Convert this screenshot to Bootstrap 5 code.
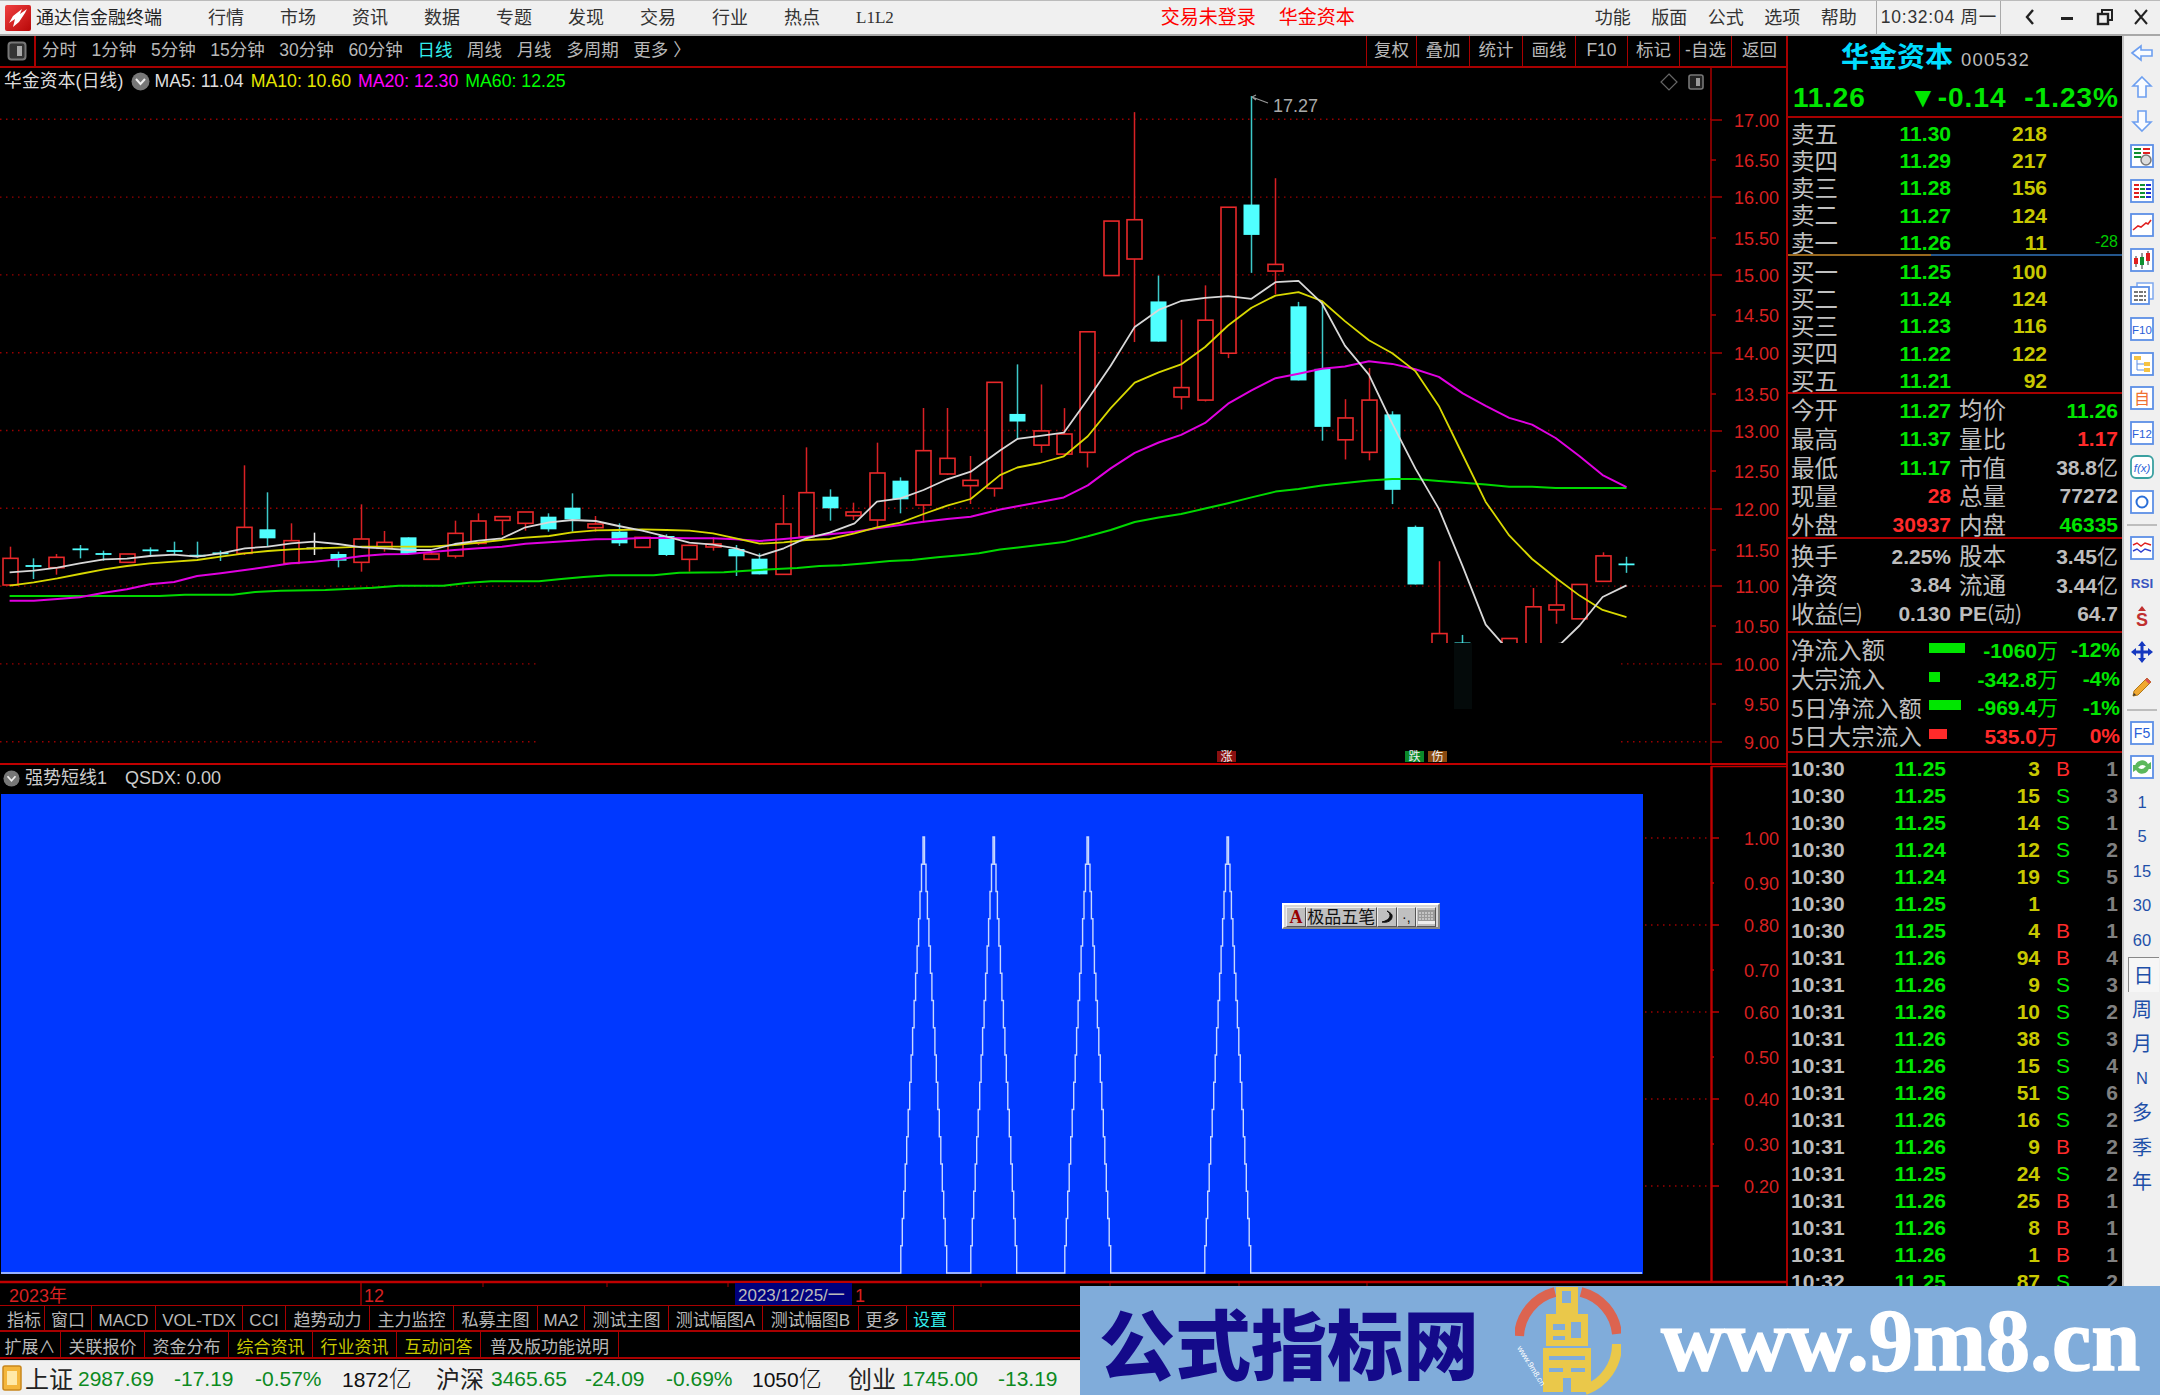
<!DOCTYPE html>
<html lang="zh-CN">
<head>
<meta charset="utf-8">
<title>通达信金融终端</title>
<link href="https://cdn.jsdelivr.net/npm/bootstrap@5.3.0/dist/css/bootstrap.min.css" rel="stylesheet">
<style>
html,body{margin:0;height:100%;background:#000;overflow:hidden}
body{font-family:"Liberation Sans","Noto Sans CJK SC",sans-serif;line-height:1;color:#bbb}
.app-root{width:2160px;height:1395px;display:flex;flex-direction:column;position:relative}
/* title bar */
.title-strip{height:36px;flex:none;background:#f0f0f0;border-top:1px solid #bbb;border-bottom:2px solid #a8a8a8;font-size:18px;color:#333;white-space:nowrap}
.logo-mark{width:26px;height:26px;margin-left:5px;flex:none}
.app-name{margin-left:5px;width:125px;color:#222}
.menu-set{margin-left:47px;gap:36px}
.menu-set .l-code{font-size:17px;font-family:"Liberation Serif",serif}
.login-set{margin-left:267px;gap:23px;font-size:19px;color:#f00}
.util-set{margin-left:240px;gap:20.5px}
.clock-box{margin-left:19px;border-left:1px solid #aaa;border-right:1px solid #aaa;height:33px;width:125px;padding-left:4px;font-size:17.5px;letter-spacing:.75px}
.win-btns{margin-left:0;flex:1;color:#222}
.win-btns svg{position:absolute;top:8px}
/* middle */
.mid-zone{height:1324px;flex:none;display:flex}
.left-col{width:1787px;flex:none;display:flex;flex-direction:column}
.tool-strip{height:32px;flex:none;border-bottom:2px solid #a80000;font-size:17.5px;color:#b8b8b8;white-space:nowrap}
.tool-box{width:36px;height:30px;border-right:2px solid #a80000;flex:none}
.per-set{margin-left:6px;gap:14.6px}
.cyan-txt{color:#33eeee}
.act-set{margin-left:auto;height:30px}
.act-cell{border-left:1px solid #a80000;height:30px;display:flex;align-items:center;justify-content:center}
.chart-wrap{position:relative;height:1237px;flex:none}
.chart-wrap svg.chart-canvas{display:block}
.legend-top{position:absolute;left:4px;top:4px;font-size:17.7px;white-space:nowrap;color:#ddd;gap:0}
.legend-top .mk{width:19px;height:19px;margin:0 5px 0 7px;flex:none}
.legend-top .ma-it{margin-right:7px}
.legend-low{position:absolute;left:3px;top:701px;font-size:18px;white-space:nowrap;color:#ccc}
.ime-bar{position:absolute;left:1282px;top:835px;width:158px;height:26px;background:#d6d6d6;border:2px solid;border-color:#fff #888 #888 #fff;font-size:17px;color:#111;display:flex;padding:2px}
.ime-cell{background:#c0c0c0;border:1px solid;border-color:#eee #555 #555 #eee;height:20px;display:flex;align-items:center;justify-content:center;overflow:hidden}
.tab-strip{height:27px;flex:none;border-bottom:2px solid #a80000;font-size:17px;color:#b8b8b8;white-space:nowrap}
.tab-cell{border-right:1px solid #a80000;height:25px;padding-top:5px;display:flex;align-items:center;justify-content:center;flex:none}
.yel-txt{color:#c8c800}
/* quote panel */
.quote-col{width:336px;flex:none;border-left:2px solid #a80000;margin-left:-1px;display:flex;flex-direction:column;overflow:hidden;font-size:21px;font-weight:700;white-space:nowrap}
.q-sec{border-bottom:2px solid #a80000;flex:none;padding-left:3px}
.name-row{height:44px;padding-left:53px}
.name-big{font-size:28px;color:#00dcff;font-weight:700;width:120px}
.code-txt{font-size:18.5px;color:#bbb;font-weight:400;letter-spacing:1.2px;margin-top:5px}
.px-row{height:38px;font-size:28px;color:#00e600;position:relative;padding-left:5px}
.px-row .p1{width:116px;letter-spacing:.8px}
.px-row .p2{width:90px;letter-spacing:1px}
.px-row .p3{width:120px;letter-spacing:1px}
.q-row{display:flex;align-items:center;padding-top:4px}
.r27{height:27.2px}
.trade-list .r27{height:27px}
.r285{height:28.6px}
.lb{font-family:"Noto Sans CJK SC",sans-serif;font-weight:400;font-size:23.5px;color:#c0c0c0;flex:none}
.lb-a{width:60px}
.va{width:100px;text-align:right;flex:none}
.vb{width:96px;text-align:right;flex:none}
.vc{width:71px;text-align:right;flex:none}
.lb-b{width:66px;margin-left:8px}
.vd{width:93px;text-align:right;flex:none}
.gr{color:#00e600}.ye{color:#c8c800}.re{color:#ff2a2a}.gy{color:#bdbdbd}.dg{color:#808080}
.thin-g{font-size:16px;font-weight:400;color:#00c800}
.cjk-n{font-family:"Noto Sans CJK SC",sans-serif;font-weight:400}
.split-line{height:2px;flex:none;background:linear-gradient(90deg,#9a6a20 0 143px,#24568c 143px 100%)}
.flow-lb{width:138px;flex:none;font-family:"Noto Sans CJK SC",sans-serif;font-weight:400;font-size:23.5px;color:#c0c0c0}
.flow-lb.wide-lb{letter-spacing:.6px;font-size:23px}
.flow-bar{width:36px;flex:none;height:10px;margin-top:-4px}
.flow-bar i{display:block;height:10px}
.ve{width:93px;text-align:right;flex:none}
.vf{width:62px;text-align:right;flex:none}
.t-a{width:60px;flex:none;color:#bdbdbd}
.t-b{width:95px;text-align:right;flex:none;color:#00e600}
.t-c{width:94px;text-align:right;flex:none;color:#c8c800}
.t-d{width:30px;text-align:right;flex:none;font-weight:400}
.t-e{width:48px;text-align:right;flex:none;color:#808080}
/* sidebar */
.side-col{flex:1;background:#f0f0f0;border-left:2px solid #c4c4c4;display:flex;flex-direction:column;align-items:center;color:#1e4fa8;font-size:16.5px;position:relative;padding-top:0}
.side-it{height:34.6px;flex:none;width:100%;display:flex;align-items:center;justify-content:center}
.side-it:first-child{height:33.6px}
.side-it svg{width:24px;height:24px}
.side-it text{font-family:"Liberation Sans",sans-serif}
.side-sep{height:2px;width:30px;background:#bdbdbd;margin:4.8px 0}
.side-txt{height:34.5px;flex:none;width:100%;display:flex;align-items:center;justify-content:center}
.side-on{background:#f6f6f6;border-top:1px solid #888;border-left:1px solid #888;width:31px;margin-left:2px}
.side-cjk{font-family:"Noto Sans CJK SC",sans-serif;font-size:20px}
/* status */
.status-strip{height:35px;flex:none;background:#f0f0f0;display:grid;grid-template-columns:23px 53px 96px 81px 87px 94px 55px 94px 81px 86px 96px 54px 96px 80px 1fr;align-items:center;font-size:21px;color:#0d8a1f;white-space:nowrap;padding-left:2px;border-top:1px solid #ddd}
.st-idx{font-size:24px;color:#222;font-family:"Noto Sans CJK SC",sans-serif}
.st-amt{color:#111}
.st-amt span{font-family:"Noto Sans CJK SC",sans-serif;font-size:23px;font-weight:300}
/* banner */
.wm-banner{position:absolute;left:1080px;top:1286px;width:1080px;height:109px;background:#80acda;display:flex;align-items:center}
.wm-cn{font-family:"Noto Sans CJK SC",sans-serif;font-weight:900;font-size:76px;color:#140a8a;margin-left:19px;width:416px;letter-spacing:0;line-height:1;white-space:nowrap}
.wm-en{font-family:"Liberation Serif",serif;font-weight:700;font-size:88px;color:#fff;margin-left:40px;line-height:1;white-space:nowrap;-webkit-text-stroke:1.5px #fff}
.wm-logo{width:106px;height:109px;flex:none}
</style>
</head>
<body>
<div class="app-root">

<header class="title-strip d-flex align-items-center">
  <svg class="logo-mark" viewBox="0 0 26 26"><defs><linearGradient id="lg" x1="0" y1="0" x2="1" y2="1"><stop offset="0" stop-color="#f04040"/><stop offset="1" stop-color="#b80808"/></linearGradient></defs><rect width="26" height="26" rx="2" fill="url(#lg)"/><path d="M22 4 L15 9 L17 4 L8 11 L4 18 L10 14 L8 22 L14 17 L20 8 Z" fill="#fff"/></svg>
  <span class="app-name">通达信金融终端</span>
  <nav class="menu-set d-flex"><span>行情</span><span>市场</span><span>资讯</span><span>数据</span><span>专题</span><span>发现</span><span>交易</span><span>行业</span><span>热点</span><span class="l-code">L1L2</span></nav>
  <div class="login-set d-flex"><span>交易未登录</span><span>华金资本</span></div>
  <nav class="util-set d-flex"><span>功能</span><span>版面</span><span>公式</span><span>选项</span><span>帮助</span></nav>
  <div class="clock-box d-flex align-items-center">10:32:04 周一</div>
  <div class="win-btns">
    <svg style="left:2022px" width="16" height="18" viewBox="0 0 16 18"><path d="M11 2 L5 9 L11 16" fill="none" stroke="#222" stroke-width="2.4"/></svg>
    <svg style="left:2060px" width="14" height="18" viewBox="0 0 14 18"><rect x="1" y="9" width="12" height="3" fill="#222"/></svg>
    <svg style="left:2096px" width="18" height="18" viewBox="0 0 18 18"><rect x="6" y="2" width="10" height="10" fill="none" stroke="#222" stroke-width="2"/><rect x="2" y="6" width="10" height="10" fill="#f0f0f0" stroke="#222" stroke-width="2.4"/></svg>
    <svg style="left:2133px" width="16" height="18" viewBox="0 0 16 18"><path d="M2 2 L14 16 M14 2 L2 16" stroke="#222" stroke-width="2"/></svg>
  </div>
</header>

<div class="mid-zone">
  <div class="left-col">
    <div class="tool-strip d-flex align-items-center">
      <div class="tool-box d-flex align-items-center justify-content-center"><svg width="20" height="20" viewBox="0 0 20 20"><rect x="1.5" y="1.5" width="17" height="17" rx="3" fill="#333" stroke="#777" stroke-width="2"/><rect x="10" y="5" width="5" height="10" fill="#aaa"/></svg></div>
      <nav class="per-set d-flex align-items-center"><span>分时</span><span>1分钟</span><span>5分钟</span><span>15分钟</span><span>30分钟</span><span>60分钟</span><span class="cyan-txt">日线</span><span>周线</span><span>月线</span><span>多周期</span><span>更多 〉</span></nav>
      <nav class="act-set d-flex">
        <span class="act-cell" style="width:50px">复权</span><span class="act-cell" style="width:53px">叠加</span><span class="act-cell" style="width:53px">统计</span><span class="act-cell" style="width:53px">画线</span><span class="act-cell" style="width:52px">F10</span><span class="act-cell" style="width:52px">标记</span><span class="act-cell" style="width:52px">-自选</span><span class="act-cell" style="width:56px">返回</span>
      </nav>
    </div>

    <div class="chart-wrap">
      <svg class="chart-canvas" id="cv" width="1787" height="1237" viewBox="0 68 1787 1237" xmlns="http://www.w3.org/2000/svg" font-family="Liberation Sans, sans-serif"></svg>
      <div class="legend-top d-flex align-items-center">
        <span style="letter-spacing:.2px">华金资本(日线)</span>
        <svg class="mk" viewBox="0 0 19 19"><circle cx="9.5" cy="9.5" r="9" fill="#777"/><path d="M5 7 L9.5 12 L14 7" fill="none" stroke="#eee" stroke-width="2"/></svg>
        <span class="ma-it">MA5: 11.04</span><span class="ma-it" style="color:#e6e600">MA10: 10.60</span><span class="ma-it" style="color:#f0f">MA20: 12.30</span><span style="color:#0f0">MA60: 12.25</span>
      </div>
      <div class="legend-low d-flex align-items-center">
        <svg width="17" height="17" viewBox="0 0 19 19" class="me-1"><circle cx="9.5" cy="9.5" r="9" fill="#777"/><path d="M5 7 L9.5 12 L14 7" fill="none" stroke="#eee" stroke-width="2"/></svg>
        <span style="margin-right:18px;margin-left:1px">强势短线1</span><span>QSDX: 0.00</span>
      </div>
      <div class="ime-bar">
        <span class="ime-cell" style="width:20px;color:#900;font-family:'Liberation Serif',serif;font-weight:700;font-size:18px">A</span>
        <span class="ime-cell" style="width:72px">极品五笔</span>
        <span class="ime-cell" style="width:20px"><svg width="14" height="14" viewBox="0 0 14 14"><path d="M7 1 C12 4 11 10 2 12 C7 13 13 11 12 5 C11 3 9 2 7 1Z" fill="#111" stroke="#111"/></svg></span>
        <span class="ime-cell" style="width:20px;font-size:14px">·,</span>
        <span class="ime-cell" style="width:20px"><svg width="17" height="14" viewBox="0 0 17 14"><rect width="17" height="14" fill="#999"/><path d="M1 3H16M1 6H16M1 9H16" stroke="#eee" stroke-dasharray="2 1"/><rect y="11" width="17" height="3" fill="#eee"/></svg></span>
      </div>
    </div>

    <nav class="tab-strip d-flex align-items-center" style="border-top:1px solid #a80000">
      <span class="tab-cell ms-1" style="width:41px">指标</span><span class="tab-cell" style="width:47px">窗口</span><span class="tab-cell" style="width:64px">MACD</span><span class="tab-cell" style="width:87px">VOL-TDX</span><span class="tab-cell" style="width:43px">CCI</span><span class="tab-cell" style="width:84px">趋势动力</span><span class="tab-cell" style="width:84px">主力监控</span><span class="tab-cell" style="width:84px">私募主图</span><span class="tab-cell" style="width:47px">MA2</span><span class="tab-cell" style="width:84px">测试主图</span><span class="tab-cell" style="width:94px">测试幅图A</span><span class="tab-cell" style="width:96px">测试幅图B</span><span class="tab-cell" style="width:48px">更多</span><span class="tab-cell cyan-txt" style="width:47px">设置</span>
    </nav>
    <nav class="tab-strip d-flex align-items-center">
      <span class="tab-cell" style="width:61px">扩展∧</span><span class="tab-cell" style="width:84px">关联报价</span><span class="tab-cell" style="width:84px">资金分布</span><span class="tab-cell yel-txt" style="width:84px">综合资讯</span><span class="tab-cell yel-txt" style="width:84px">行业资讯</span><span class="tab-cell yel-txt" style="width:84px">互动问答</span><span class="tab-cell" style="width:138px">普及版功能说明</span>
    </nav>
  </div>

  <aside class="quote-col">
    <div class="name-row d-flex align-items-center"><span class="name-big">华金资本</span><span class="code-txt">000532</span></div>
    <div class="q-sec px-row d-flex align-items-center"><span class="p1">11.26</span><span class="p2 text-end">▼-0.14</span><span class="p3 text-end">-1.23%</span></div>

    <section class="q-body" style="padding-left:3px">
      <div class="q-row r27"><span class="lb lb-a">卖五</span><span class="va gr">11.30</span><span class="vb ye">218</span></div>
      <div class="q-row r27"><span class="lb lb-a">卖四</span><span class="va gr">11.29</span><span class="vb ye">217</span></div>
      <div class="q-row r27"><span class="lb lb-a">卖三</span><span class="va gr">11.28</span><span class="vb ye">156</span></div>
      <div class="q-row r27"><span class="lb lb-a">卖二</span><span class="va gr">11.27</span><span class="vb ye">124</span></div>
      <div class="q-row r27"><span class="lb lb-a">卖一</span><span class="va gr">11.26</span><span class="vb ye">11</span><span class="vc thin-g">-28</span></div>
    </section>
    <div class="split-line"></div>
    <section class="q-sec">
      <div class="q-row r27"><span class="lb lb-a">买一</span><span class="va gr">11.25</span><span class="vb ye">100</span></div>
      <div class="q-row r27"><span class="lb lb-a">买二</span><span class="va gr">11.24</span><span class="vb ye">124</span></div>
      <div class="q-row r27"><span class="lb lb-a">买三</span><span class="va gr">11.23</span><span class="vb ye">116</span></div>
      <div class="q-row r27"><span class="lb lb-a">买四</span><span class="va gr">11.22</span><span class="vb ye">122</span></div>
      <div class="q-row r27"><span class="lb lb-a">买五</span><span class="va gr">11.21</span><span class="vb ye">92</span></div>
    </section>
    <section class="q-sec">
      <div class="q-row r285"><span class="lb lb-a">今开</span><span class="va gr">11.27</span><span class="lb lb-b">均价</span><span class="vd gr">11.26</span></div>
      <div class="q-row r285"><span class="lb lb-a">最高</span><span class="va gr">11.37</span><span class="lb lb-b">量比</span><span class="vd re">1.17</span></div>
      <div class="q-row r285"><span class="lb lb-a">最低</span><span class="va gr">11.17</span><span class="lb lb-b">市值</span><span class="vd gy">38.8<span class="cjk-n">亿</span></span></div>
      <div class="q-row r285"><span class="lb lb-a">现量</span><span class="va re">28</span><span class="lb lb-b">总量</span><span class="vd gy">77272</span></div>
      <div class="q-row r285"><span class="lb lb-a">外盘</span><span class="va re">30937</span><span class="lb lb-b">内盘</span><span class="vd gr">46335</span></div>
    </section>
    <section class="q-sec" style="padding-top:1px;padding-bottom:5px">
      <div class="q-row r285"><span class="lb lb-a">换手</span><span class="va gy">2.25%</span><span class="lb lb-b">股本</span><span class="vd gy">3.45<span class="cjk-n">亿</span></span></div>
      <div class="q-row r285"><span class="lb lb-a">净资</span><span class="va gy">3.84</span><span class="lb lb-b">流通</span><span class="vd gy">3.44<span class="cjk-n">亿</span></span></div>
      <div class="q-row r285"><span class="lb" style="width:78px">收益㈢</span><span class="gy text-end flex-none" style="width:82px">0.130</span><span class="lb-b gy flex-none">PE<span class="cjk-n">(动)</span></span><span class="vd gy">64.7</span></div>
    </section>
    <section class="q-sec" style="padding-top:1px;padding-bottom:3px">
      <div class="q-row r285"><span class="flow-lb">净流入额</span><span class="flow-bar"><i class="w-100" style="background:#00e600"></i></span><span class="ve gr">-1060<span class="cjk-n">万</span></span><span class="vf gr">-12%</span></div>
      <div class="q-row r285"><span class="flow-lb">大宗流入</span><span class="flow-bar"><i style="width:11px;background:#00e600"></i></span><span class="ve gr">-342.8<span class="cjk-n">万</span></span><span class="vf gr">-4%</span></div>
      <div class="q-row r285"><span class="flow-lb wide-lb">5日净流入额</span><span class="flow-bar"><i style="width:32px;background:#00e600"></i></span><span class="ve gr">-969.4<span class="cjk-n">万</span></span><span class="vf gr">-1%</span></div>
      <div class="q-row r285"><span class="flow-lb wide-lb">5日大宗流入</span><span class="flow-bar"><i style="width:18px;background:#ff2a2a"></i></span><span class="ve re">535.0<span class="cjk-n">万</span></span><span class="vf re">0%</span></div>
    </section>
    <section class="trade-list" style="padding-left:3px;flex:1;overflow:hidden">
      <div class="q-row r27"><span class="t-a">10:30</span><span class="t-b">11.25</span><span class="t-c">3</span><span class="t-d re">B</span><span class="t-e">1</span></div>
      <div class="q-row r27"><span class="t-a">10:30</span><span class="t-b">11.25</span><span class="t-c">15</span><span class="t-d gr">S</span><span class="t-e">3</span></div>
      <div class="q-row r27"><span class="t-a">10:30</span><span class="t-b">11.25</span><span class="t-c">14</span><span class="t-d gr">S</span><span class="t-e">1</span></div>
      <div class="q-row r27"><span class="t-a">10:30</span><span class="t-b">11.24</span><span class="t-c">12</span><span class="t-d gr">S</span><span class="t-e">2</span></div>
      <div class="q-row r27"><span class="t-a">10:30</span><span class="t-b">11.24</span><span class="t-c">19</span><span class="t-d gr">S</span><span class="t-e">5</span></div>
      <div class="q-row r27"><span class="t-a">10:30</span><span class="t-b">11.25</span><span class="t-c">1</span><span class="t-d"></span><span class="t-e">1</span></div>
      <div class="q-row r27"><span class="t-a">10:30</span><span class="t-b">11.25</span><span class="t-c">4</span><span class="t-d re">B</span><span class="t-e">1</span></div>
      <div class="q-row r27"><span class="t-a">10:31</span><span class="t-b">11.26</span><span class="t-c">94</span><span class="t-d re">B</span><span class="t-e">4</span></div>
      <div class="q-row r27"><span class="t-a">10:31</span><span class="t-b">11.26</span><span class="t-c">9</span><span class="t-d gr">S</span><span class="t-e">3</span></div>
      <div class="q-row r27"><span class="t-a">10:31</span><span class="t-b">11.26</span><span class="t-c">10</span><span class="t-d gr">S</span><span class="t-e">2</span></div>
      <div class="q-row r27"><span class="t-a">10:31</span><span class="t-b">11.26</span><span class="t-c">38</span><span class="t-d gr">S</span><span class="t-e">3</span></div>
      <div class="q-row r27"><span class="t-a">10:31</span><span class="t-b">11.26</span><span class="t-c">15</span><span class="t-d gr">S</span><span class="t-e">4</span></div>
      <div class="q-row r27"><span class="t-a">10:31</span><span class="t-b">11.26</span><span class="t-c">51</span><span class="t-d gr">S</span><span class="t-e">6</span></div>
      <div class="q-row r27"><span class="t-a">10:31</span><span class="t-b">11.26</span><span class="t-c">16</span><span class="t-d gr">S</span><span class="t-e">2</span></div>
      <div class="q-row r27"><span class="t-a">10:31</span><span class="t-b">11.26</span><span class="t-c">9</span><span class="t-d re">B</span><span class="t-e">2</span></div>
      <div class="q-row r27"><span class="t-a">10:31</span><span class="t-b">11.25</span><span class="t-c">24</span><span class="t-d gr">S</span><span class="t-e">2</span></div>
      <div class="q-row r27"><span class="t-a">10:31</span><span class="t-b">11.26</span><span class="t-c">25</span><span class="t-d re">B</span><span class="t-e">1</span></div>
      <div class="q-row r27"><span class="t-a">10:31</span><span class="t-b">11.26</span><span class="t-c">8</span><span class="t-d re">B</span><span class="t-e">1</span></div>
      <div class="q-row r27"><span class="t-a">10:31</span><span class="t-b">11.26</span><span class="t-c">1</span><span class="t-d re">B</span><span class="t-e">1</span></div>
      <div class="q-row r27"><span class="t-a">10:32</span><span class="t-b">11.25</span><span class="t-c">87</span><span class="t-d gr">S</span><span class="t-e">2</span></div>
    </section>
  </aside>

  <aside class="side-col">
    <div class="side-it"><svg viewBox="0 0 24 24"><path d="M2 12 L11 5 V9 H22 V15 H11 V19Z" fill="#fafcff" stroke="#6d9ff0" stroke-width="1.6"/></svg></div>
    <div class="side-it"><svg viewBox="0 0 24 24"><path d="M12 2 L21 11 H16 V22 H8 V11 H3Z" fill="#fafcff" stroke="#6d9ff0" stroke-width="1.6"/></svg></div>
    <div class="side-it"><svg viewBox="0 0 24 24"><path d="M12 22 L21 13 H16 V2 H8 V13 H3Z" fill="#fafcff" stroke="#6d9ff0" stroke-width="1.6"/></svg></div>
    <div class="side-it"><svg viewBox="0 0 24 24"><rect x="1" y="1" width="22" height="22" fill="#fff" stroke="#5c8fe6" stroke-width="1.8"/><path d="M4 5H11M4 9H11M4 13H11" stroke="#109030" stroke-width="2"/><path d="M13 5H20M13 9H20" stroke="#e02020" stroke-width="2"/><circle cx="16" cy="16" r="5" fill="#ddd" stroke="#777" stroke-width="1.5"/></svg></div>
    <div class="side-it"><svg viewBox="0 0 24 24"><rect x="1" y="1" width="22" height="22" fill="#fff" stroke="#5c8fe6" stroke-width="1.8"/><path d="M4 6H9M4 10H9M4 14H9M4 18H9" stroke="#e02020" stroke-width="2"/><path d="M10 6H15M10 10H15M10 14H15M10 18H15" stroke="#109030" stroke-width="2"/><path d="M16 6H21M16 10H21M16 14H21M16 18H21" stroke="#2030d0" stroke-width="2"/></svg></div>
    <div class="side-it"><svg viewBox="0 0 24 24"><rect x="1" y="1" width="22" height="22" fill="#fff" stroke="#5c8fe6" stroke-width="1.8"/><path d="M3 17 L8 13 L11 14 L16 10 L18 11 L21 7" fill="none" stroke="#e02020" stroke-width="1.6"/></svg></div>
    <div class="side-it"><svg viewBox="0 0 24 24"><rect x="1" y="1" width="22" height="22" fill="#fff" stroke="#5c8fe6" stroke-width="1.8"/><path d="M6 8V19M12 5V21M18 3V17" stroke="#333" stroke-width="1"/><rect x="4" y="10" width="4" height="6" fill="#e02020"/><rect x="10" y="9" width="4" height="8" fill="#109030"/><rect x="16" y="5" width="4" height="8" fill="#e02020"/></svg></div>
    <div class="side-it"><svg viewBox="0 0 24 24"><rect x="7" y="1" width="16" height="16" fill="#fff" stroke="#7ea8ee" stroke-width="1.5"/><rect x="1" y="5" width="18" height="17" fill="#fff" stroke="#5c8fe6" stroke-width="1.8"/><path d="M4 10H16M4 14H16M4 18H16" stroke="#777" stroke-width="1.8" stroke-dasharray="4 1"/></svg></div>
    <div class="side-it"><svg viewBox="0 0 24 24"><rect x="1" y="1" width="22" height="22" fill="#fff" stroke="#5c8fe6" stroke-width="1.8"/><text x="12" y="17" text-anchor="middle" font-size="11.5" fill="#2a5fd8">F10</text></svg></div>
    <div class="side-it"><svg viewBox="0 0 24 24"><rect x="1" y="1" width="22" height="22" fill="#fff" stroke="#5c8fe6" stroke-width="1.8"/><rect x="4" y="4" width="7" height="4" fill="#f5c242"/><rect x="14" y="10" width="6" height="4" fill="#f5c242"/><rect x="14" y="16" width="6" height="4" fill="#f5c242"/><path d="M7 8V18H14M7 12H14" fill="none" stroke="#5c8fe6"/></svg></div>
    <div class="side-it"><svg viewBox="0 0 24 24"><rect x="1" y="1" width="22" height="22" fill="#fff" stroke="#5c8fe6" stroke-width="1.8"/><text x="12" y="18" text-anchor="middle" font-size="16" fill="#f07030" style="font-family:'Noto Sans CJK SC',sans-serif">自</text></svg></div>
    <div class="side-it"><svg viewBox="0 0 24 24"><rect x="1" y="1" width="22" height="22" fill="#fff" stroke="#5c8fe6" stroke-width="1.8"/><text x="12" y="17" text-anchor="middle" font-size="11.5" fill="#2a5fd8">F12</text></svg></div>
    <div class="side-it"><svg viewBox="0 0 24 24"><rect x="1" y="1" width="22" height="22" rx="5" fill="#fff" stroke="#3aa0a0" stroke-width="1.8"/><text x="12" y="16.5" text-anchor="middle" font-size="11.5" font-style="italic" fill="#2a5fd8">f(x)</text></svg></div>
    <div class="side-it"><svg viewBox="0 0 24 24"><rect x="1" y="1" width="22" height="22" fill="#fff" stroke="#5c8fe6" stroke-width="1.8"/><circle cx="12" cy="12" r="5.5" fill="none" stroke="#2a6fd8" stroke-width="2"/></svg></div>
    <div class="side-sep"></div>
    <div class="side-it"><svg viewBox="0 0 24 24"><rect x="1" y="1" width="22" height="22" fill="#fff" stroke="#5c8fe6" stroke-width="1.8"/><path d="M3 9 L7 7 L11 10 L15 7 L21 9" fill="none" stroke="#e02020" stroke-width="1.4"/><path d="M3 15 L7 13 L11 16 L15 13 L21 15" fill="none" stroke="#3040d0" stroke-width="1.4"/></svg></div>
    <div class="side-it"><svg viewBox="0 0 24 24"><text x="12" y="17" text-anchor="middle" font-size="13.5" font-weight="700" fill="#3a55c0">RSI</text></svg></div>
    <div class="side-it"><svg viewBox="0 0 24 24"><path d="M12 1 L16 6 H8Z" fill="#c03030"/><text x="12" y="21" text-anchor="middle" font-size="18" font-weight="700" fill="#c03030">S</text></svg></div>
    <div class="side-it"><svg viewBox="0 0 24 24"><path d="M12 1 L16 6 H13.5 V10.5 H18 V8 L23 12 L18 16 V13.5 H13.5 V18 H16 L12 23 L8 18 H10.5 V13.5 H6 V16 L1 12 L6 8 V10.5 H10.5 V6 H8Z" fill="#1538c0"/></svg></div>
    <div class="side-it"><svg viewBox="0 0 24 24"><path d="M17 3 L21 7 L8 20 L3 21 L4 16Z" fill="#f0a830" stroke="#b07818"/><path d="M17 3 L21 7 L19 9 L15 5Z" fill="#d85050"/><path d="M3 21 L4 18 L6 20Z" fill="#333"/></svg></div>
    <div class="side-sep"></div>
    <div class="side-it"><svg viewBox="0 0 24 24"><rect x="1" y="1" width="22" height="22" fill="#fff" stroke="#5c8fe6" stroke-width="1.8"/><text x="12" y="17" text-anchor="middle" font-size="14" fill="#2a5fd8">F5</text></svg></div>
    <div class="side-it"><svg viewBox="0 0 24 24"><rect x="1" y="1" width="22" height="22" fill="#fff" stroke="#5c8fe6" stroke-width="1.8"/><path d="M5 11 A7 7 0 0 1 18 9 L21 7 V14 H14 L16 12 A4 4 0 0 0 9 12Z" fill="#5cb85c"/><path d="M19 13 A7 7 0 0 1 6 15 L3 17 V10 H10 L8 12 A4 4 0 0 0 15 12Z" fill="#5cb85c"/></svg></div>
    <div class="side-txt">1</div>
    <div class="side-txt">5</div>
    <div class="side-txt">15</div>
    <div class="side-txt">30</div>
    <div class="side-txt">60</div>
    <div class="side-txt side-cjk side-on">日</div>
    <div class="side-txt side-cjk">周</div>
    <div class="side-txt side-cjk">月</div>
    <div class="side-txt">N</div>
    <div class="side-txt side-cjk">多</div>
    <div class="side-txt side-cjk">季</div>
    <div class="side-txt side-cjk">年</div>
  </aside>
</div>

<footer class="status-strip">
  <svg width="20" height="26" viewBox="0 0 20 26"><rect x="1" y="1" width="18" height="24" rx="2" fill="#f4b63c" stroke="#c8861c" stroke-width="1.5"/><rect x="5" y="6" width="10" height="14" fill="#ffe9a8"/></svg>
  <span class="st-idx">上证</span><span>2987.69</span><span>-17.19</span><span>-0.57%</span><span class="st-amt">1872<span>亿</span></span>
  <span class="st-idx">沪深</span><span>3465.65</span><span>-24.09</span><span>-0.69%</span><span class="st-amt">1050<span>亿</span></span>
  <span class="st-idx">创业</span><span>1745.00</span><span>-13.19</span>
</footer>

<aside class="wm-banner">
  <span class="wm-cn">公式指标网</span>
  <svg class="wm-logo" viewBox="0 0 106 109">
    <path d="M4 50 A48 48 0 0 1 40 6" fill="none" stroke="#dc6450" stroke-width="10"/>
    <path d="M66 6 A48 48 0 0 1 102 48" fill="none" stroke="#dc6450" stroke-width="10"/>
    <path d="M102 58 A48 48 0 0 1 70 104" fill="none" stroke="#eac84a" stroke-width="10"/>
    <rect x="41" y="1" width="22" height="30" fill="#eac84a"/><rect x="47" y="5" width="9" height="12" fill="#80acda"/>
    <rect x="31" y="28" width="42" height="32" fill="#eac84a"/>
    <path d="M38 38H50V44H38ZM56 36H66V52H56ZM38 50H50V54H38Z" fill="#80acda"/>
    <rect x="28" y="62" width="48" height="44" fill="#eac84a"/>
    <path d="M34 70H70V74H34ZM34 82H48V86H34ZM56 82H70V86H56ZM48 92H56V106H48Z" fill="#80acda"/>
    <text x="2" y="62" font-size="8" fill="#fff" font-family="Liberation Sans, sans-serif" transform="rotate(58 2 62)">www.9m8.cn</text>
  </svg>
  <span class="wm-en">www.9m8.cn</span>
</aside>
</div>

<script src="https://cdn.jsdelivr.net/npm/bootstrap@5.3.0/dist/js/bootstrap.bundle.min.js"></script>
<script>
(function(){
var NS='http://www.w3.org/2000/svg',cv=document.getElementById('cv');
function el(t,a,txt){var e=document.createElementNS(NS,t);for(var k in a)e.setAttribute(k,a[k]);if(txt!=null)e.textContent=txt;cv.appendChild(e);return e}
var R='#a80000';
function dotted(x1,x2,y){el('line',{x1:x1,x2:x2,y1:y,y2:y,stroke:'#9a0000','stroke-width':1.4,'stroke-dasharray':'1.5 4.5'})}
function y(p){return 119.3+(17-p)*77.8}
[17,16,15,14,13,12,11].forEach(function(p){dotted(0,1711,y(p))});
[10,9].forEach(function(p){dotted(0,537,y(p));dotted(1621,1711,y(p))});
var lab=[['17.00',120],['16.50',160],['16.00',197],['15.50',238],['15.00',275],['14.50',315],['14.00',353],['13.50',394],['13.00',431],['12.50',471],['12.00',509],['11.50',550],['11.00',586],['10.50',626],['10.00',664],['9.50',704],['9.00',742]];
lab.forEach(function(l,i){el('line',{x1:1711,x2:i%2?1716:1722,y1:l[1],y2:l[1],stroke:R,'stroke-width':1.5});el('text',{x:1779,y:l[1]+6.5,'text-anchor':'end','font-size':18,fill:'#d82020'},l[0])});
var c=[];
function Z9(v){return 440+v/3}
function Z8(v){return 80+v/2.24}
[[0,'r',355,435,320,437],[1,'c',378,381,355,417],[2,'r',352,383,342,404],[3,'c',328,342,315,355],[4,'c',342,356,332,362],[5,'r',342,367,342,367],[6,'c',331,335,322,347],[7,'c',333,343,305,345],[8,'c',347,349,305,353],[9,'c',340,342,332,363],[10,'r',262,340,76,345],[11,'c',268,295,157,320],[12,'r',302,370,250,372],[13,'w',325,330,278,345],[14,'c',342,362,335,382],[15,'r',297,367,193,395],[16,'r',307,325,273,335],[17,'c',292,342,292,342],[18,'r',342,358,335,358],[19,'r',280,348,242,355],[20,'r',243,310,220,315],[21,'r',230,241,230,285],[22,'r',216,250,216,272],[23,'c',230,268,220,275],[24,'c',203,238,160,275],[25,'r',252,263,228,275],[26,'c',275,310,250,318],[27,'r',292,322,292,322],[28,'c',288,345,283,348],[29,'r',316,358,316,395],[30,'r',312,321,292,332],[31,'c',327,349,315,408],[32,'c',356,403,340,403],[33,'r',252,403,165,403],[34,'r',158,290,22,300],[35,'c',170,205,148,242],[36,'r',216,227,188,240],[37,'r',99,240,8,262],[38,'c',122,178,112,220],[39,'r',32,195,-96,248],[40,'r',55,102,-96,105],[41,'r',121,137,48,192],[42,'r',-173,145,-173,170]].forEach(function(a){c.push([a[0],a[1],Z9(a[2]),Z9(a[3]),Z9(a[4]),Z9(a[5])])});
[[43,'c',748,765,637,805],[44,'r',786,818,682,835],[45,'r',793,838,735,838],[46,'r',564,834,564,868],[47,'r',316,438,316,438],[48,'r',313,401,72,587],[49,'c',496,586,438,586],[50,'r',689,710,537,738],[51,'r',538,717,460,720],[52,'r',285,612,285,623],[53,'c',279,347,36,432],[54,'r',413,428,220,480],[55,'c',507,673,497,673],[56,'c',647,777,497,808],[57,'r',757,806,715,850],[58,'r',717,834,645,852],[59,'c',749,918,742,950],[60,'c',1001,1130,998,1130],[61,'r',1240,1400,1078,1400],[62,'c',1262,1264,1243,1400],[64,'r',1251,1400,1251,1400],[65,'r',1180,1400,1138,1400],[66,'r',1176,1187,1115,1218],[67,'r',1130,1207,1130,1207],[68,'r',1066,1123,1058,1123],[69,'c',1085,1087,1068,1104]].forEach(function(a){c.push([a[0],a[1],Z8(a[2]),Z8(a[3]),Z8(a[4]),Z8(a[5])])});
function cx(n){return 9.6+23.43*n}
function ln(pts9,pts8,col,w){var p=pts9.map(function(q){return (q[0]/1.568).toFixed(1)+','+Z9(q[1]).toFixed(1)}).concat(pts8.map(function(q){return (1000+q[0]/1.96).toFixed(1)+','+Z8(q[1]).toFixed(1)}));el('polyline',{points:p.join(' '),fill:'none',stroke:col,'stroke-width':w,'stroke-linejoin':'round'})}
var Cn='#50ffff',Rd='#e8282a';
c.forEach(function(k){var x=Math.round(cx(k[0]))+.5,col=k[1]=='r'?Rd:k[1]=='w'?'#eee':Cn,wc=k[1]=='r'?'#d82024':k[1]=='w'?'#eee':'#3cc8c8';
 el('line',{x1:x,x2:x,y1:k[4],y2:k[5],stroke:wc,'stroke-width':1.5});
 var h=k[3]-k[2];
 if(k[1]=='r'){el('rect',{x:x-7.5,y:k[2],width:15,height:h,fill:'#000',stroke:col,'stroke-width':1.6})}
 else{ if(h<5){el('line',{x1:x-8,x2:x+8,y1:k[2],y2:k[2],stroke:col,'stroke-width':1.8})} else el('rect',{x:x-8,y:k[2],width:16,height:h,fill:col})}
});
ln([[15,468],[250,468],[290,464],[365,464],[400,456],[440,452],[510,450],[585,443],[625,437],[695,437],[735,428],[770,424],[845,424],[880,417],[915,411],[955,406],[1025,406],[1065,398],[1135,397],[1170,392],[1210,388],[1250,384],[1285,378],[1320,376],[1358,370],[1395,363],[1430,360],[1470,352],[1510,345],[1535,340]],[[0,1052],[60,1044],[125,1035],[172,1022],[217,1008],[264,990],[311,980],[355,972],[402,960],[447,948],[493,935],[540,922],[585,916],[631,908],[676,903],[723,897],[769,894],[814,894],[860,898],[907,902],[952,906],[998,911],[1043,911],[1089,914],[1136,914],[1181,914],[1228,914]],'#00d800',2);
ln([[15,482],[53,482],[90,477],[125,472],[163,458],[199,448],[235,433],[273,426],[309,408],[346,400],[384,390],[420,380],[457,370],[492,365],[530,358],[568,348],[603,343],[640,342],[676,336],[713,330],[751,325],[787,320],[824,311],[861,307],[897,302],[934,298],[970,297],[1007,294],[1045,294],[1081,295],[1118,295],[1154,298],[1191,303],[1229,297],[1264,291],[1301,283],[1340,275],[1375,265],[1412,255],[1448,245],[1485,237],[1522,230]],[[0,962],[34,955],[79,945],[125,935],[172,908],[217,870],[264,835],[311,812],[355,795],[402,768],[447,725],[493,695],[540,668],[585,658],[631,647],[676,642],[723,630],[769,636],[814,648],[860,665],[907,702],[952,730],[998,757],[1043,772],[1089,802],[1136,843],[1181,885],[1228,912]],'#e000e0',2);
ln([[15,437],[53,427],[90,415],[125,402],[163,388],[199,378],[235,370],[273,365],[309,360],[346,350],[384,340],[420,333],[457,328],[492,325],[530,323],[568,320],[603,320],[640,320],[676,320],[713,315],[751,308],[787,300],[824,293],[861,288],[897,277],[934,271],[970,270],[1007,268],[1045,270],[1081,272],[1118,280],[1154,295],[1191,311],[1229,307],[1264,300],[1301,297],[1340,280],[1375,262],[1412,248],[1448,222],[1485,197],[1522,177]],[[0,885],[34,868],[79,858],[125,843],[172,798],[217,735],[264,678],[311,655],[355,637],[402,598],[447,550],[493,510],[540,483],[585,475],[631,495],[676,540],[723,583],[769,612],[814,652],[860,730],[907,840],[952,945],[998,1020],[1043,1073],[1089,1115],[1136,1155],[1181,1187],[1228,1203]],'#d8d800',1.8);
ln([[15,397],[53,392],[90,383],[125,370],[163,358],[199,356],[235,348],[273,344],[309,350],[346,340],[384,325],[420,320],[457,310],[492,305],[530,312],[568,322],[603,325],[640,330],[676,330],[713,312],[751,302],[787,295],[824,262],[861,247],[897,240],[934,243],[970,258],[1007,272],[1045,290],[1081,308],[1118,314],[1154,325],[1191,348],[1229,325],[1264,295],[1301,278],[1340,250],[1375,185],[1412,175],[1448,150],[1485,118],[1522,95]],[[0,830],[34,804],[79,797],[125,790],[172,715],[217,640],[264,553],[311,515],[355,495],[402,488],[447,484],[493,490],[540,453],[585,450],[631,500],[676,595],[723,660],[769,770],[814,870],[860,960],[907,1090],[952,1220],[998,1280],[1100,1262],[1136,1222],[1181,1158],[1228,1132]],'#d8d8d8',1.8);
el('rect',{x:537,y:643,width:1084,height:108,fill:'#000'});
el('rect',{x:1454,y:643,width:18,height:66,fill:'#040a0a'});
el('path',{d:'M1252 97 L1268 103 M1252 97 L1256 95 M1252 97 L1256 100',stroke:'#999','stroke-width':1.2,fill:'none'});
el('text',{x:1273,y:112,'font-size':18,fill:'#aaa'},'17.27');
function tag(x,w,col,t){el('rect',{x:x,y:751,width:w,height:11,fill:col});el('text',{x:x+w/2,y:761,'text-anchor':'middle','font-size':12,fill:'#eee','font-family':'Noto Sans CJK SC'},t)}
tag(1217,19,'#8a1010','涨');tag(1405,19,'#0a8a2a','跌');tag(1428,19,'#8a4a10','伤');
el('path',{d:'M1669 74 L1677 82 L1669 90 L1661 82Z',fill:'none',stroke:'#666','stroke-width':1.2});
el('rect',{x:1689,y:75,width:14,height:14,rx:2,fill:'#222',stroke:'#777','stroke-width':1.6});
el('rect',{x:1696,y:78,width:4,height:8,fill:'#999'});
el('line',{x1:1711,x2:1711,y1:68,y2:764,stroke:R,'stroke-width':1.5});
el('line',{x1:0,x2:1787,y1:764,y2:764,stroke:'#c00000','stroke-width':2});
el('line',{x1:1711,x2:1787,y1:766.5,y2:766.5,stroke:'#c00000','stroke-width':1.5});
el('line',{x1:1711.5,x2:1711.5,y1:766,y2:1282,stroke:'#c00000','stroke-width':2.4});
el('rect',{x:1,y:794,width:1642,height:480,fill:'#0038ff'});
var pk=[923,993,1087,1227],pts=['1,1273'],hw=23.7,n=16;
pk.forEach(function(x){var i,f,yy,xx,py=1273;pts.push((x-hw)+',1273');
 for(i=1;i<=n;i++){f=i/n;yy=1273-f*436;xx=x-hw*(1-f);pts.push(xx.toFixed(1)+','+py.toFixed(1));pts.push(xx.toFixed(1)+','+yy.toFixed(1));py=yy}
 for(i=n-1;i>=0;i--){f=i/n;yy=1273-f*436;xx=x+hw*(1-f);pts.push(xx.toFixed(1)+','+py.toFixed(1));pts.push(xx.toFixed(1)+','+yy.toFixed(1));py=yy}
 pts.push((x+hw)+',1273')});
pts.push('1642,1273');
el('polyline',{points:pts.join(' '),fill:'none',stroke:'#c8d8ff','stroke-width':1.4});
[838,925,1012,1099,1186].forEach(function(v){dotted(1645,1711,v)});
[['1.00',838,1],['0.90',883,0],['0.80',925,1],['0.70',970,0],['0.60',1012,1],['0.50',1057,0],['0.40',1099,1],['0.30',1144,0],['0.20',1186,1]].forEach(function(l){
 el('line',{x1:1711,x2:l[2]?1719:1714,y1:l[1],y2:l[1],stroke:'#c00000','stroke-width':1.5});
 el('text',{x:1779,y:l[1]+6.5,'text-anchor':'end','font-size':18,fill:'#d82020'},l[0])});
el('line',{x1:0,x2:1787,y1:1282,y2:1282,stroke:'#c00000','stroke-width':2.4});
el('text',{x:9,y:1302,'font-size':18,fill:'#d82020','font-family':'Liberation Sans, Noto Sans CJK SC, sans-serif'},'2023年');
el('line',{x1:361,x2:361,y1:1283,y2:1305,stroke:R,'stroke-width':1.4});
el('text',{x:364,y:1302,'font-size':18,fill:'#d82020'},'12');
[483,607,728,981,1110,1239,1367].forEach(function(x){el('line',{x1:x,x2:x,y1:1283,y2:1287,stroke:R})});
el('rect',{x:735,y:1283,width:117,height:22,fill:'#00007e'});
el('text',{x:738,y:1301,'font-size':17,fill:'#bbb','font-family':'Liberation Sans, Noto Sans CJK SC, sans-serif'},'2023/12/25/一');
el('text',{x:855,y:1302,'font-size':18,fill:'#d82020'},'1');
})();
</script>
</body>
</html>
